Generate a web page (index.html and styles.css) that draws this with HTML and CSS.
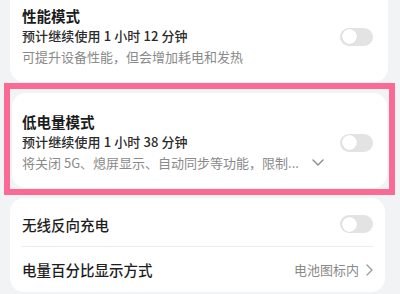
FILE: index.html
```html
<!DOCTYPE html>
<html lang="zh-CN">
<head>
<meta charset="utf-8">
<title>电池设置</title>
<link rel="stylesheet" href="styles.css">
</head>
<body>
<div class="page">
  <section class="card card-top">
    <div class="item">
      <div class="text">
        <div class="title">性能模式</div>
        <div class="sub">预计继续使用 1 小时 12 分钟</div>
        <div class="desc">可提升设备性能，但会增加耗电和发热</div>
      </div>
      <span class="toggle"></span>
    </div>
  </section>

  <div class="highlight">
    <section class="card card-mid">
      <div class="item">
        <div class="text">
          <div class="title">低电量模式</div>
          <div class="sub">预计继续使用 1 小时 38 分钟</div>
          <div class="desc desc-row">
            <span>将关闭 5G、熄屏显示、自动同步等功能，限制...</span>
            <svg class="chev-down" width="12" height="7" viewBox="0 0 12 7"><path d="M1 1 L6 6 L11 1" fill="none" stroke="#8a8a8a" stroke-width="1.4" stroke-linecap="round" stroke-linejoin="round"/></svg>
          </div>
        </div>
        <span class="toggle"></span>
      </div>
    </section>
  </div>

  <section class="card card-bottom">
    <div class="row row-first">
      <span class="row-title">无线反向充电</span>
      <span class="toggle"></span>
    </div>
    <div class="divider"></div>
    <div class="row row-last">
      <span class="row-title">电量百分比显示方式</span>
      <span class="row-value">电池图标内
        <svg class="chev-right" width="7" height="12" viewBox="0 0 7 12"><path d="M1 1 L6 6 L1 11" fill="none" stroke="#9a9a9a" stroke-width="1.3" stroke-linecap="round" stroke-linejoin="round"/></svg>
      </span>
    </div>
  </section>
</div>
</body>
</html>
```

FILE: styles.css
```css
html, body {
  margin: 0;
  padding: 0;
}
body {
  background: #f1f3f5;
  font-family: "Noto Sans CJK SC", "Noto Sans", sans-serif;
  width: 400px;
  height: 294px;
  overflow: hidden;
}
.page {
  display: flex;
  flex-direction: column;
}
.card {
  background: #ffffff;
  border-radius: 14px;
}
.card-top {
  margin: -13px 12px 0 10px;
  padding: 19px 15px 15px 12px;
}
.highlight {
  margin: 1px 5px 0 4px;
  border: 6px solid #fa6a94;
  padding: 4px 2px 1px 2px;
}
.card-mid {
  padding: 19px 14px 15px 10px;
}
.item {
  display: flex;
  align-items: center;
  gap: 16px;
}
.text {
  flex: 1;
  min-width: 0;
}
.title {
  font-size: 14.5px;
  line-height: 20px;
  font-weight: 600;
  color: #1b1b1b;
}
.sub {
  font-size: 13px;
  line-height: 20px;
  font-weight: 500;
  color: #2b2b2b;
  letter-spacing: 0.1px;
}
.desc {
  font-size: 13px;
  line-height: 21px;
  color: #8a8a8a;
  white-space: nowrap;
}
.desc-row {
  display: flex;
  align-items: center;
  justify-content: space-between;
}
.chev-down {
  flex: none;
}
.toggle {
  flex: none;
  position: relative;
  width: 33px;
  height: 18px;
  border-radius: 9px;
  background: #e3e3e3;
}
.toggle::after {
  content: "";
  position: absolute;
  left: 1.5px;
  top: 1.5px;
  width: 15px;
  height: 15px;
  border-radius: 50%;
  background: #ffffff;
  box-shadow: 0 0 1px rgba(0,0,0,0.15);
}
.card-bottom {
  margin: 3px 15px 0 10px;
  padding: 4px 0 0 0;
}
.row {
  display: flex;
  align-items: center;
  justify-content: space-between;
  padding: 0 12px;
}
.row-first {
  height: 44px;
}
.row-last {
  height: 45px;
}
.row-title {
  font-size: 14.5px;
  font-weight: 500;
  color: #1e1e1e;
}
.row-value {
  display: flex;
  align-items: center;
  gap: 7px;
  font-size: 13px;
  color: #8a8a8a;
}
.divider {
  height: 1px;
  margin: 0 12px;
  background: #ececec;
}
```
